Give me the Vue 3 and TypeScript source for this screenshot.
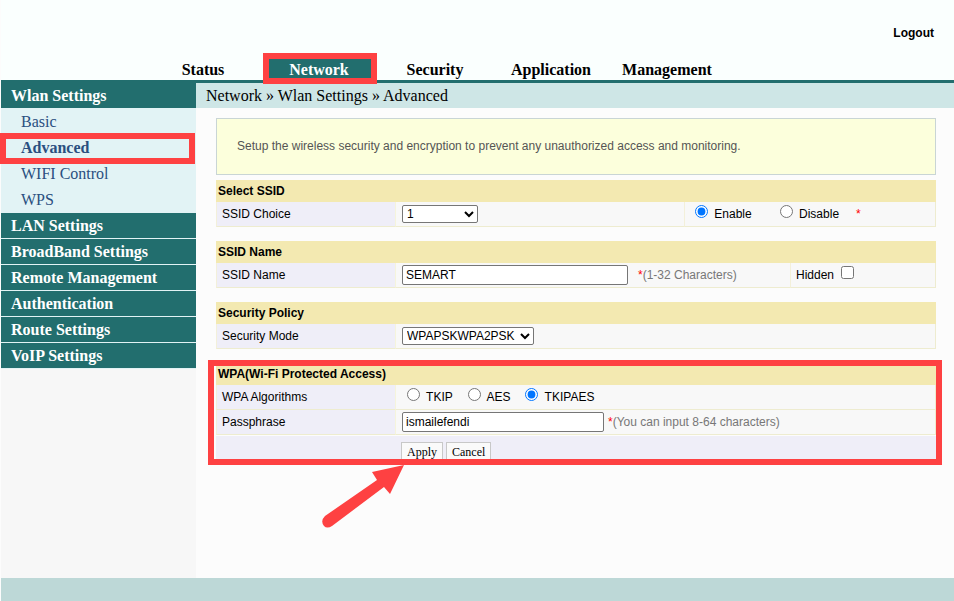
<script setup lang="ts">
import { ref } from 'vue'

interface MenuGroup {
  title: string
  items: string[]
}

const tabs: string[] = ['Status', 'Network', 'Security', 'Application', 'Management']
const activeTab = ref('Network')

const menu: MenuGroup[] = [
  { title: 'Wlan Settings', items: ['Basic', 'Advanced', 'WIFI Control', 'WPS'] },
  { title: 'LAN Settings', items: [] },
  { title: 'BroadBand Settings', items: [] },
  { title: 'Remote Management', items: [] },
  { title: 'Authentication', items: [] },
  { title: 'Route Settings', items: [] },
  { title: 'VoIP Settings', items: [] },
]
const activeItem = ref('Advanced')

const algorithms: string[] = ['TKIP', 'AES', 'TKIPAES']

const ssidIndex = ref('1')
const ssidState = ref('Enable')
const ssidName = ref('SEMART')
const hidden = ref(false)
const securityMode = ref('WPAPSKWPA2PSK')
const algorithm = ref('TKIPAES')
const passphrase = ref('ismailefendi')
</script>

<template>
  <div class="page">
    <header class="header">
      <a class="logout" href="#">Logout</a>
      <nav class="tabs">
        <a
          v-for="tab in tabs"
          :key="tab"
          href="#"
          class="tab"
          :class="{ active: tab === activeTab }"
          @click.prevent="activeTab = tab"
        >{{ tab }}<span v-if="tab === 'Network'" class="callout tab-callout"></span></a>
      </nav>
    </header>

    <div class="body">
      <aside class="sidebar">
        <section v-for="group in menu" :key="group.title" class="group">
          <a href="#" class="group-title">{{ group.title }}</a>
          <ul v-if="group.items.length" class="items">
            <li v-for="item in group.items" :key="item" class="item">
              <a
                href="#"
                class="item-link"
                :class="{ active: item === activeItem }"
                @click.prevent="activeItem = item"
              >{{ item }}</a>
              <span v-if="item === 'Advanced'" class="callout item-callout"></span>
            </li>
          </ul>
        </section>
      </aside>

      <main class="main">
        <div class="crumbs">Network » Wlan Settings » Advanced</div>
        <form class="content" @submit.prevent>
          <p class="notice">
            Setup the wireless security and encryption to prevent any unauthorized access and monitoring.
          </p>

          <table class="panel">
            <colgroup><col class="c25" /><col class="c40" /><col /></colgroup>
            <thead>
              <tr><th colspan="3">Select SSID</th></tr>
            </thead>
            <tbody>
              <tr>
                <td class="name"><label for="ssid-choice">SSID Choice</label></td>
                <td>
                  <select id="ssid-choice" v-model="ssidIndex" class="short">
                    <option>1</option>
                    <option>2</option>
                    <option>3</option>
                    <option>4</option>
                  </select>
                </td>
                <td class="split ticks">
                  <label class="wide"><input v-model="ssidState" type="radio" name="state" value="Enable" /> Enable</label>
                  <label><input v-model="ssidState" type="radio" name="state" value="Disable" /> Disable</label>
                  <span class="required spaced">*</span>
                </td>
              </tr>
            </tbody>
          </table>

          <table class="panel">
            <colgroup><col class="c25" /><col /><col class="c20" /></colgroup>
            <thead>
              <tr><th colspan="3">SSID Name</th></tr>
            </thead>
            <tbody>
              <tr>
                <td class="name"><label for="ssid-name">SSID Name</label></td>
                <td>
                  <div class="field apart">
                    <input id="ssid-name" v-model="ssidName" type="text" class="text long" />
                    <span class="hint"><span class="required">*</span>(1-32 Characters)</span>
                  </div>
                </td>
                <td class="split ticks">
                  <label>Hidden <input v-model="hidden" type="checkbox" /></label>
                </td>
              </tr>
            </tbody>
          </table>

          <table class="panel">
            <colgroup><col class="c25" /><col /></colgroup>
            <thead>
              <tr><th colspan="2">Security Policy</th></tr>
            </thead>
            <tbody>
              <tr>
                <td class="name"><label for="mode">Security Mode</label></td>
                <td>
                  <select id="mode" v-model="securityMode" class="mode">
                    <option>WPAPSKWPA2PSK</option>
                    <option>WPA2PSK</option>
                    <option>WPAPSK</option>
                  </select>
                </td>
              </tr>
            </tbody>
          </table>

          <div class="wpa">
            <table class="panel">
              <colgroup><col class="c25" /><col /></colgroup>
              <thead>
                <tr><th colspan="2">WPA(Wi-Fi Protected Access)</th></tr>
              </thead>
              <tbody>
                <tr>
                  <td class="name">WPA Algorithms</td>
                  <td class="ticks">
                    <label v-for="name in algorithms" :key="name" class="algorithm"><input v-model="algorithm" type="radio" name="algorithm" :value="name" /> {{ name }}</label>
                  </td>
                </tr>
                <tr>
                  <td class="name"><label for="passphrase">Passphrase</label></td>
                  <td>
                    <div class="field">
                      <input id="passphrase" v-model="passphrase" type="text" class="text medium" />
                      <span class="hint"><span class="required">*</span>(You can input 8-64 characters)</span>
                    </div>
                  </td>
                </tr>
              </tbody>
            </table>
            <div class="actions">
              <button type="submit">Apply</button>
              <button type="button">Cancel</button>
            </div>
            <span class="callout wpa-callout"></span>
            <svg class="arrow" width="84" height="64" viewBox="0 0 84 64" aria-hidden="true">
              <path d="M82 0 L68 29 L62 22 L10 61 Q5 64 2 61 Q-2 56 3 51 L55 15 L50 7 Z" />
            </svg>
          </div>
        </form>
      </main>
    </div>

    <footer class="footer"></footer>
  </div>
</template>

<style>
body {
  margin: 0;
  background: #fcfcfc;
}
</style>

<style scoped>
.page {
  display: flex;
  flex-direction: column;
  min-height: 100vh;
  padding-left: 1px;
  box-sizing: border-box;
  font: 12px/16px "Liberation Sans", Arial, sans-serif;
  color: #000;
}

a {
  color: inherit;
  text-decoration: none;
}

.header {
  display: flex;
  flex-direction: column;
  background: #fafffe;
  border-bottom: 3px solid #226e6e;
}

.logout {
  align-self: flex-end;
  padding: 25px 20px 17px 0;
  font-weight: bold;
  line-height: 16px;
}

.tabs {
  display: flex;
  margin-left: 144px;
  font: bold 16px/22px "Liberation Serif", "Times New Roman", serif;
}

.tab {
  position: relative;
  box-sizing: border-box;
  width: 106px;
  height: 22px;
  margin: 0 5px;
  padding-top: 1px;
  text-align: center;
}

.tab.active {
  background: #226e6e;
  color: #fff;
}

.callout {
  position: absolute;
  border: 6px solid #fe4142;
  pointer-events: none;
}

.tab-callout {
  inset: -5px -5px -4px -3px;
}

.body {
  display: flex;
  flex: 1;
}

.sidebar {
  flex: none;
  width: 195px;
  background: #f7f7f7;
  font: 16px/25px "Liberation Serif", "Times New Roman", serif;
}

.group-title {
  display: block;
  padding-left: 10px;
  border-bottom: 1px solid #e2f3f5;
  background: #226e6e;
  color: #fff;
  font-weight: bold;
}

.items {
  margin: 0;
  padding: 0;
  list-style: none;
  background: #e2f3f5;
  color: #2a4f80;
}

.item {
  position: relative;
  line-height: 26px;
}

.item-link {
  display: block;
  padding-left: 20px;
}

.item-link.active {
  font-weight: bold;
}

.item-callout {
  inset: -2px 1px -3px -1px;
}

.main {
  flex: 1;
  min-width: 0;
}

.crumbs {
  padding-left: 10px;
  background: #cee6e6;
  font: 16px/25px "Liberation Serif", "Times New Roman", serif;
}

.content {
  display: flex;
  flex-direction: column;
  gap: 14px;
  padding: 10px 18px 14px 20px;
}

.notice {
  margin: 0 0 -9px;
  padding: 19px 20px 20px;
  border: 1px solid #c9d5d5;
  background: #fcffdc;
  color: #555;
}

.panel {
  width: 100%;
  border-collapse: separate;
  border-spacing: 0;
  table-layout: fixed;
  background: #f8f8f8;
}

.c20 {
  width: 146px;
}

.c25 {
  width: 25%;
}

.c40 {
  width: 40%;
}

th {
  height: 22px;
  padding: 0 2px;
  background: #f3e9b1;
  text-align: left;
}

td {
  height: 24px;
  padding: 0 6px;
  border-bottom: 1px solid #eeecd0;
}

td:last-child {
  border-right: 1px solid #eeecd0;
}

.name {
  background: #efeef8;
  border-right: 1px solid #f5f4dc;
}

.name,
.split {
  border-left: 1px solid #f3f0da;
  padding-left: 5px;
}

.name + td {
  padding-left: 6px;
}

.ticks {
  padding-bottom: 4px;
  height: 20px;
}

select,
.text {
  box-sizing: border-box;
  margin: 0;
  border: 1px solid #767676;
  border-radius: 2px;
  background-color: #fff;
  color: #000;
  font: inherit;
  vertical-align: middle;
}

select {
  height: 18px;
}

.short {
  width: 76px;
}

.mode {
  width: 132px;
}

.field {
  display: flex;
  align-items: center;
  gap: 4px;
}

.field.apart {
  gap: 10px;
}

.text {
  height: 20px;
  padding: 1px 3px;
}

.long {
  width: 226px;
}

.medium {
  width: 202px;
}

input[type="radio"] {
  margin: 3px 3px 0 5px;
}

input[type="checkbox"] {
  margin: 3px 3px 3px 4px;
}

.wide {
  margin-right: 23px;
}

.algorithm {
  margin-right: 10px;
}

.hint {
  color: #777;
}

.required {
  color: #f00;
}

.spaced {
  margin-left: 17px;
}

.wpa {
  position: relative;
}

.actions {
  display: flex;
  gap: 3px;
  margin-top: 1px;
  padding: 6px 0 0 25.7%;
  background: #efeef8;
}

button {
  height: 20px;
  padding: 0 5px;
  border: 1px solid #c8c8c8;
  background: #fafafa;
  color: #000;
  font: 12px/18px "Liberation Serif", "Times New Roman", serif;
}

.wpa-callout {
  inset: -3px -6px -3px -8px;
}

.arrow {
  position: absolute;
  top: 100%;
  left: 106px;
  margin-top: 3px;
  fill: #fe4142;
  overflow: visible;
}

.footer {
  height: 23px;
  background: #bdd8d7;
}
</style>
